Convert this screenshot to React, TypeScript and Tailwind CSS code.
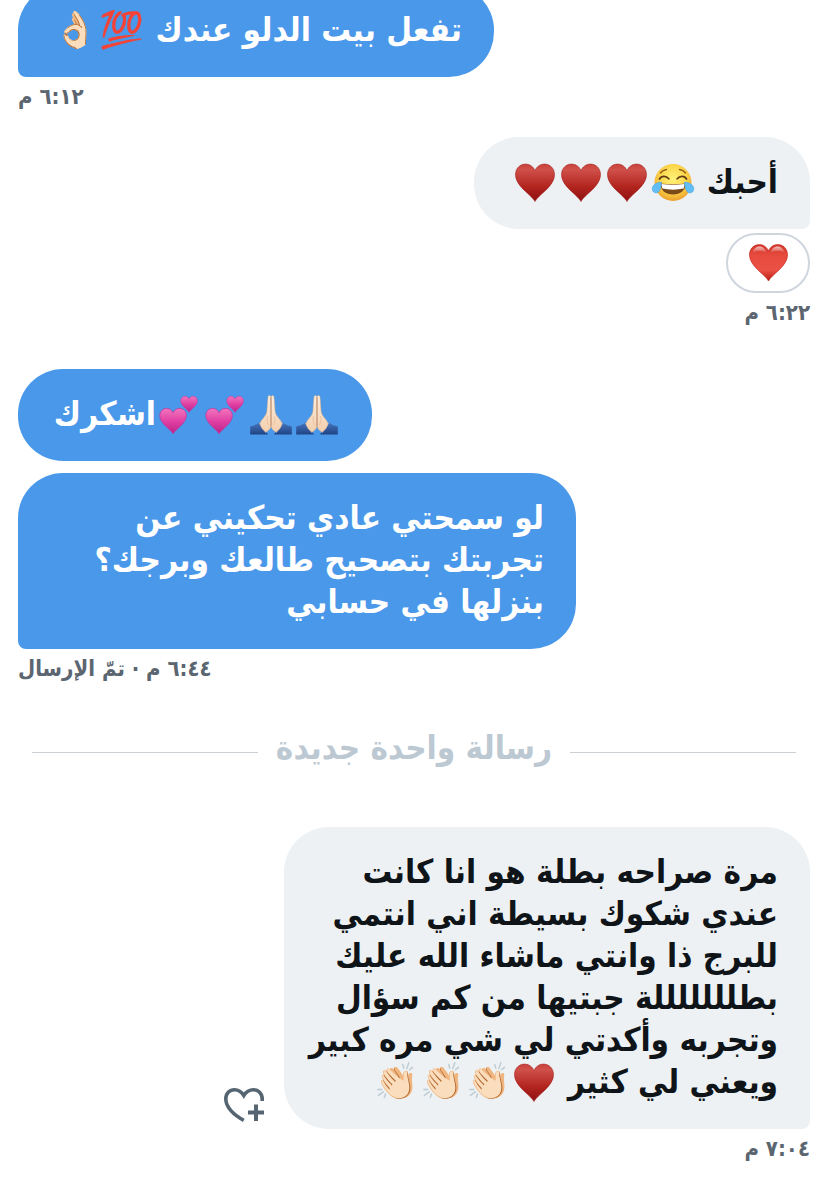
import type { ReactNode } from 'react';

const HEART =
  'M20 38C17 31.5 .5 23 .5 11.2C.5 4.8 5 .6 10.6 .6C15.2 .6 18.6 3.6 20 7.2C21.4 3.6 24.8 .6 29.4 .6C35 .6 39.5 4.8 39.5 11.2C39.5 23 23 31.5 20 38Z';

function Gradients() {
  return (
    <svg width="0" height="0" className="absolute" aria-hidden="true">
      <defs>
        <linearGradient id="suit" x1="0" y1="0" x2="0" y2="1">
          <stop offset="0" stopColor="#c9423b" />
          <stop offset="0.15" stopColor="#d0504a" />
          <stop offset="0.6" stopColor="#b3251f" />
          <stop offset="1" stopColor="#8d0f10" />
        </linearGradient>
        <linearGradient id="red" x1="0" y1="0" x2="0" y2="1">
          <stop offset="0" stopColor="#d2362a" />
          <stop offset="0.3" stopColor="#e64b3e" />
          <stop offset="0.7" stopColor="#ec5145" />
          <stop offset="1" stopColor="#b5180f" />
        </linearGradient>
        <linearGradient id="gloss" x1="0" y1="0" x2="0" y2="1">
          <stop offset="0" stopColor="#fff" stopOpacity="0.7" />
          <stop offset="1" stopColor="#fff" stopOpacity="0" />
        </linearGradient>
        <linearGradient id="pink" x1="0" y1="0" x2="0" y2="1">
          <stop offset="0" stopColor="#f276bd" />
          <stop offset="0.5" stopColor="#e040a4" />
          <stop offset="1" stopColor="#bd2288" />
        </linearGradient>
        <radialGradient id="face" cx="0.5" cy="0.4" r="0.6">
          <stop offset="0" stopColor="#fff27a" />
          <stop offset="0.6" stopColor="#fdd74a" />
          <stop offset="1" stopColor="#ec9f2c" />
        </radialGradient>
        <linearGradient id="skin" x1="0" y1="0" x2="0" y2="1">
          <stop offset="0" stopColor="#fdeedd" />
          <stop offset="1" stopColor="#f3cfae" />
        </linearGradient>
        <linearGradient id="sleeve" x1="0" y1="0" x2="0" y2="1">
          <stop offset="0" stopColor="#4a78c0" />
          <stop offset="1" stopColor="#1f4384" />
        </linearGradient>
      </defs>
    </svg>
  );
}

function Drawing({ label, children }: { label: string; children: ReactNode }) {
  return (
    <svg
      role="img"
      aria-label={label}
      viewBox="-3 0 46 40"
      className="inline-block h-[40px] w-[46px] overflow-visible align-[-9px]"
    >
      {children}
    </svg>
  );
}

function Suit() {
  return (
    <Drawing label="♥">
      <path d={HEART} fill="url(#suit)" stroke="#a3201d" strokeWidth="0.6" transform="translate(0 1.5)" />
    </Drawing>
  );
}

function TwoHearts() {
  return (
    <Drawing label="💕">
      <path d={HEART} fill="url(#pink)" stroke="#cf2a93" transform="translate(0.5 14) scale(0.68)" />
      <path d={HEART} fill="url(#pink)" stroke="#cf2a93" transform="translate(21.5 2) scale(0.43)" />
    </Drawing>
  );
}

function Joy() {
  return (
    <Drawing label="😂">
      <circle cx="20" cy="20.5" r="18.5" fill="url(#face)" />
      <path d="M6.5 17C8.500 13.500 13 13.400 15.800 16.800M24.200 16.800C27 13.400 31.500 13.500 33.500 17" fill="none" stroke="#5f3a12" strokeWidth="1.8" strokeLinecap="round" />
      <path d="M7.500 11C9 9 11 7.800 13.500 7.500M32.500 11C31 9 29 7.800 26.500 7.500" fill="none" stroke="#8d5c17" strokeWidth="1.3" strokeLinecap="round" />
      <path d="M7.500 21.500C15 22.500 25 22.500 32.500 21.500C32.500 28.500 27.500 32.500 20 32.500S7.500 28.500 7.500 21.500Z" fill="#7a4a18" />
      <path d="M8.500 22C15.500 23 24.500 23 31.500 22C31.500 24 31 25.500 30.500 26.500C24 28 16 28 9.500 26.500C9 25.500 8.500 24 8.500 22Z" fill="#fff" />
      <path d="M8.500 20C3 20.500-.500 23-.800 26.500C-1 29.500 1.500 31.500 4 30.800C7.500 29.800 8.200 24.500 8.500 20ZM31.500 20C37 20.500 40.500 23 40.800 26.500C41 29.500 38.500 31.500 36 30.800C32.500 29.800 31.800 24.500 31.500 20Z" fill="#62bdf5" stroke="#3f9fe0" strokeWidth="0.5" />
    </Drawing>
  );
}

function Pray() {
  return (
    <Drawing label="🙏🏻">
      <path d="M-.8 32.500C3 31.500 6.500 30 9 28L17 40.500H-.8Z" fill="url(#sleeve)" />
      <path d="M40.800 32.500C37 31.500 33.500 30 31 28L23 40.500H40.800Z" fill="url(#sleeve)" />
      <path d="M8.500 29L15 38.500M31.500 29L25 38.500" stroke="#b4c9ea" strokeWidth="1.2" />
      <path d="M19.800 2.500C18.400.500 17.200 1.500 17 3.500L15.900 17.500C15.500 22 10 25.500 9 29.500C9.800 33.500 12 36.500 15.200 38C18.500 36 19.900 34 19.900 31Z" fill="url(#skin)" stroke="#dcae86" strokeWidth="0.5" />
      <path d="M20.200 2.500C21.600.500 22.800 1.500 23 3.500L24.100 17.500C24.500 22 30 25.500 31 29.500C30.200 33.500 28 36.500 24.800 38C21.500 36 20.100 34 20.100 31Z" fill="url(#skin)" stroke="#dcae86" strokeWidth="0.5" />
      <path d="M20 3V32" stroke="#c48f68" strokeWidth="0.9" />
      <path d="M16.400 22C15.800 25 16 28 17.500 31M23.600 22C24.200 25 24 28 22.500 31" fill="none" stroke="#e5b892" strokeWidth="0.7" />
    </Drawing>
  );
}

function Emoji({ children }: { children: string }) {
  return (
    <span className="inline-block h-[40px] w-[46px] overflow-hidden text-center align-[-9px] font-['Noto_Color_Emoji'] text-[36px] leading-[40px] font-normal">
      {children}
    </span>
  );
}

function Bubble({ className, children }: { className: string; children: ReactNode }) {
  return (
    <div className={`max-w-full px-8 pt-[24px] pb-[26px] text-[33px] leading-[42px] whitespace-nowrap ${className}`}>
      {children}
    </div>
  );
}

function Time({ children }: { children: string }) {
  return <p className="text-[22px] leading-[40px] text-[#5b6671]">{children}</p>;
}

const SENT = 'bg-[#4a98e9] text-white';
const RECEIVED = 'bg-[#edf1f3] text-[#0f1419]';

export default function App() {
  return (
    <div className="min-h-screen overflow-hidden bg-white">
      <Gradients />
      <main
        dir="rtl"
        className="-mt-[15px] flex flex-col px-[18px] pb-[10px] font-['DejaVu_Sans_Condensed','DejaVu_Sans',sans-serif] font-bold"
      >
        <section className="flex flex-col items-end">
          <Bubble className={`${SENT} w-[476px] rounded-[45px] rounded-bl-[8px]`}>
            تفعل بيت الدلو عندك <Emoji>💯</Emoji>
            <Emoji>👌🏻</Emoji>
          </Bubble>
          <Time>٦:١٢ م</Time>
        </section>

        <section className="mt-5 flex flex-col items-start">
          <Bubble className={`${RECEIVED} w-[336px] rounded-[45px] rounded-br-[8px]`}>
            أحبك <Joy />
            <Suit />
            <Suit />
            <Suit />
          </Bubble>
          <button
            type="button"
            aria-label="❤️"
            className="mt-1 flex h-[60px] w-[84px] items-center justify-center rounded-full border-2 border-[#cfd6de] bg-white"
          >
            <svg viewBox="0 0 40 39" className="h-[38px] w-[39px]" aria-hidden="true">
              <path d={HEART} fill="url(#red)" stroke="#c92a20" strokeWidth="0.7" />
              <path d="M3.500 9C4.500 4.500 8 2.500 11 2.500S17 5 18 9C14 6.500 7 6.500 3.500 9ZM22 9C23 5 26 2.500 29 2.500S35.500 4.500 36.500 9C33 6.500 26 6.500 22 9Z" fill="url(#gloss)" />
            </svg>
          </button>
          <Time>٦:٢٢ م</Time>
        </section>

        <section className="mt-9 flex flex-col items-end">
          <Bubble className={`${SENT} w-[354px] rounded-[45px]`}>
            <Pray />
            <Pray />
            <TwoHearts />
            <TwoHearts />
            اشكرك
          </Bubble>
          <Bubble className={`${SENT} mt-3 w-[558px] rounded-[45px] rounded-bl-[8px]`}>
            لو سمحتي عادي تحكيني عن
            <br />
            تجربتك بتصحيح طالعك وبرجك؟
            <br />
            بنزلها في حسابي
          </Bubble>
          <Time>٦:٤٤ م · تمّ الإرسال</Time>
        </section>

        <div className="mx-[14px] mt-[38px] mb-[58px] flex items-center gap-[18px]">
          <span className="mt-[8px] h-px flex-1 bg-[#ccd1d5]" />
          <h2 className="text-[33px] leading-[42px] text-[#bcc8d2]">رسالة واحدة جديدة</h2>
          <span className="mt-[8px] h-px flex-1 bg-[#ccd1d5]" />
        </div>

        <section className="flex flex-col items-start">
          <div className="flex max-w-full items-end gap-5">
            <Bubble className={`${RECEIVED} w-[526px] rounded-[45px] rounded-br-[8px]`}>
              مرة صراحه بطلة هو انا كانت
              <br />
              عندي شكوك بسيطة اني انتمي
              <br />
              للبرج ذا وانتي ماشاء الله عليك
              <br />
              بطلللللللة جبتيها من كم سؤال
              <br />
              وتجربه وأكدتي لي شي مره كبير
              <br />
              ويعني لي كثير <Suit />
              <Emoji>👏🏻</Emoji>
              <Emoji>👏🏻</Emoji>
              <Emoji>👏🏻</Emoji>
            </Bubble>
            <button type="button" aria-label="إضافة تفاعل" className="mb-1.5">
              <svg viewBox="0 0 40 36" className="h-[36px] w-[40px]" fill="none" stroke="#566572" aria-hidden="true">
                <path d="M38.200 14V12C38.200 6.500 34.200 2.700 29.500 2.700C25.500 2.700 22 4.800 19.800 8.500C17.500 4.800 14.500 2.700 10.500 2.700C5.500 2.700 1.800 6.500 1.800 12C1.800 20 9.500 28 19.800 33.300" strokeWidth="3.600" />
                <path d="M24 25.500H40M32 17.500V34" strokeWidth="4" />
              </svg>
            </button>
          </div>
          <Time>٧:٠٤ م</Time>
        </section>
      </main>
    </div>
  );
}
